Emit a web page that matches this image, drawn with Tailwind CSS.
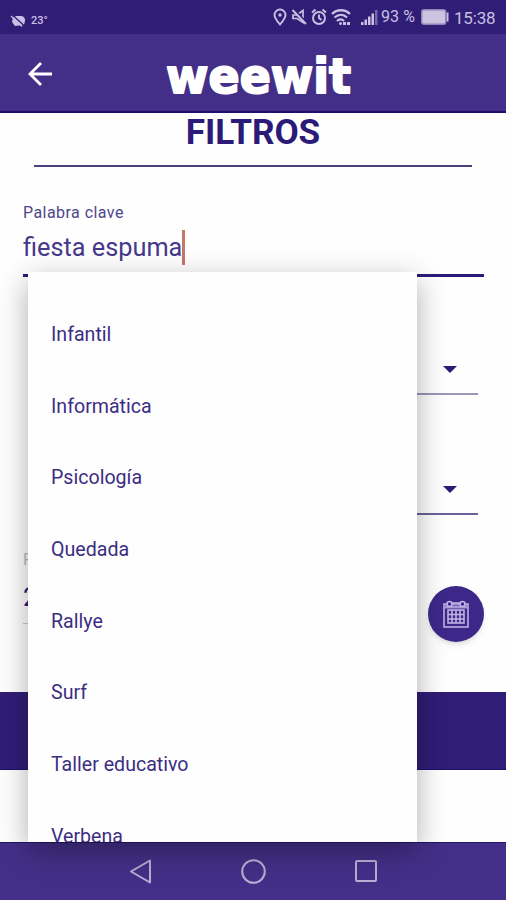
<!DOCTYPE html>
<html lang="es">
<head>
<meta charset="utf-8">
<title>weewit</title>
<script src="https://cdn.jsdelivr.net/npm/@tailwindcss/browser@4"></script>
</head>
<body class="bg-white">
<div class="relative flex h-[900px] w-[506px] flex-col overflow-hidden bg-[#fefefe] font-[Roboto,sans-serif] text-[#2c1a78]">
  <div class="flex h-[34px] shrink-0 items-center bg-[#301d76] pl-[10px] pr-[10px] text-[#c9c0e4]">
    <svg class="mt-2 h-[12px] w-[17px]" viewBox="0 0 17 12"><path d="M5 11L2 7 3 2.500 6 1h5.500A4 4 0 0 1 15 5.500L14 10z" fill="currentColor"/><path d="M2.500 0l12 11" stroke="#301d76" stroke-width="1.300"/><path d="M1 1l11 10.500" stroke="currentColor" stroke-width="1.200"/></svg>
    <span class="ml-1 mt-2 text-[11px] font-medium leading-3">23°</span>
    <svg class="ml-auto h-[20px] w-[78px]" viewBox="0 0 78 20" fill="none" stroke="currentColor" stroke-width="1.900">
      <path d="M7 17.500C4 14 1.500 11 1.500 8a5.500 5.500 0 0 1 11 0c0 3-2.500 6-5.500 9.500z"/><circle cx="7" cy="8" r="1.700" fill="currentColor" stroke="none"/>
      <path d="M20 8h4l6-4.500v12l-6-4h-4z" stroke-width="1.700"/><path d="M21 2.500l13 14" stroke="#301d76" stroke-width="2.500"/><path d="M19.500 3l13.500 14"/>
      <circle cx="46" cy="11" r="6"/><path d="M46 7.500V11l2.500 2M39 5.500l3.500-3M53 5.500l-3.500-3"/>
      <path d="M59 7c5-5 13-5 18 0M61.500 10.500c4-3.500 9-3.500 12.500 0M64 14c2-2 5-2 7 0" stroke-width="2.300"/><circle cx="67.500" cy="16.500" r="1.500" fill="currentColor" stroke="none"/><path d="M70 16.500h7" stroke-dasharray="3 1" stroke-width="3"/>
    </svg>
    <svg class="ml-[10px] h-[15px] w-[17px]" viewBox="0 0 17 15" fill="currentColor"><path d="M0 12h2.500v3H0zM3.500 9.500H6V15H3.500zM7 6.500h2.500V15H7zM10.500 3.500H13V15h-2.500z"/><path opacity=".45" d="M14 0h2.500v15H14z"/></svg>
    <span class="ml-[3px] w-[35px] whitespace-nowrap text-[16px] leading-5 tracking-[0.1px]">93 %</span>
    <svg class="ml-[5px] h-[16px] w-[28px]" viewBox="0 0 28 16"><rect x=".7" y=".7" width="24" height="14.600" rx="2" fill="#cbc4e0" stroke="#8f83b8" stroke-width="1.400"/><path d="M26.500 3.500v9" stroke="currentColor" stroke-width="2"/></svg>
    <span class="ml-[5px] mt-[1px] w-[42px] text-[17px] leading-5 tracking-[-0.2px]">15:38</span>
  </div>
  <header class="flex h-[79px] shrink-0 items-center border-b-2 border-[#200d6d] bg-[#442f88] pl-[28px]">
    <svg class="mt-[2px] h-[24px] w-[24px]" viewBox="0 0 24 24" fill="none" stroke="#fff" stroke-width="2.800"><path d="M24 12H2M13 1L2 12l11 11"/></svg>
    <svg class="ml-[113px] h-[60px] w-[200px] overflow-visible" viewBox="0 0 200 60"><text x="1" y="50" textLength="185" lengthAdjust="spacingAndGlyphs" font-family="DejaVu Sans, sans-serif" font-weight="700" font-size="48.500" fill="#fff" stroke="#fff" stroke-width="2" stroke-linejoin="round">weewit</text></svg>
  </header>
  <main class="flex flex-1 flex-col">
    <h1 class="mx-[34px] h-[54px] border-b-2 border-[#4a407e] text-center text-[35.200px] font-bold leading-[39px] tracking-[-0.1px]">FILTROS</h1>
    <section class="ml-[23px] mr-[22px] mt-[36px] flex h-[74px] flex-col border-b-[3px] border-[#2c1a78]">
      <label class="text-[16px] leading-5 tracking-[0.450px] text-[#50458b]">Palabra clave</label>
      <div class="mt-[7px] flex h-[36px] items-center text-[25.300px] leading-9 text-[#46388b]"><span>fiesta espuma</span><span class="-mt-[2px] h-[35px] w-[3px] bg-[#c57769]"></span></div>
    </section>
    <div class="ml-[28px] mr-[28px] flex h-[118px] items-end justify-end border-b-2 border-[#9c96bb] pb-[20px] pr-[21px]"><svg class="h-[7px] w-[14px]" viewBox="0 0 14 7"><path d="M0 0h14L7 7z" fill="#2c1a78"/></svg></div>
    <div class="ml-[28px] mr-[28px] flex h-[120px] items-end justify-end border-b-2 border-[#6c6299] pb-[20px] pr-[21px]"><svg class="h-[7px] w-[14px]" viewBox="0 0 14 7"><path d="M0 0h14L7 7z" fill="#2c1a78"/></svg></div>
    <div class="ml-[23px] mr-[22px] flex h-[177px] justify-between">
      <div class="mt-[35px] flex h-[74px] w-[200px] flex-col border-b border-[#ccc]"><span class="text-[16px] leading-5 text-[#bbb]">F</span><span class="mt-[9px] text-[26px] leading-9">2</span></div>
      <div class="mt-[71px] flex h-[56px] w-[56px] items-center justify-center rounded-full bg-[#3d2889] shadow-md">
        <svg class="h-[28px] w-[26px]" viewBox="0 0 26 28" fill="none" stroke="#c5b6e8" stroke-width="1.500"><rect x="1" y="4" width="24" height="23"/><path d="M1 7h24" stroke-width="3" stroke="#a796d4"/><circle cx="6.500" cy="4" r="2.500" fill="#3d2889"/><circle cx="19.500" cy="4" r="2.500" fill="#3d2889"/><path d="M9 3h8M5 10h16v13H5zM5 14.500h16M5 19h16M9 10v13M13 10v13M17 10v13" stroke-width="1.500"/></svg>
      </div>
    </div>
    <div class="h-[78px] border-b border-[#200d6d] bg-[#301d76]"></div>
  </main>
  <div class="absolute left-[28px] top-[272px] z-10 h-[570px] w-[389px]">
    <ul class="flex h-full flex-col overflow-hidden bg-[#fefefe] pl-[23px] pt-[27px] text-[19.600px] leading-[71.700px] text-[#3c2d83] shadow-[0_9px_28px_rgba(0,0,0,0.32)]">
      <li class="h-[71.700px] shrink-0">Infantil</li>
      <li class="h-[71.700px] shrink-0">Informática</li>
      <li class="h-[71.700px] shrink-0">Psicología</li>
      <li class="h-[71.700px] shrink-0">Quedada</li>
      <li class="h-[71.700px] shrink-0">Rallye</li>
      <li class="h-[71.700px] shrink-0">Surf</li>
      <li class="h-[71.700px] shrink-0">Taller educativo</li>
      <li class="h-[71.700px] shrink-0">Verbena</li>
    </ul>
  </div>
  <nav class="flex h-[58px] shrink-0 items-center justify-center gap-[88px] border-t border-[#271465] bg-[#442f88]">
    <svg class="h-[26px] w-[24px]" viewBox="0 0 24 26" fill="none" stroke="#b9aed3" stroke-width="2" stroke-linejoin="round"><path d="M22 1.500v22L3 12.500z"/></svg>
    <svg class="h-[26px] w-[26px]" viewBox="0 0 26 26" fill="none" stroke="#b9aed3" stroke-width="2"><circle cx="13.500" cy="12.500" r="11.300"/></svg>
    <svg class="h-[24px] w-[24px]" viewBox="0 0 24 24" fill="none" stroke="#b9aed3" stroke-width="2"><rect x="2" y="1" width="20" height="20" rx="1"/></svg>
  </nav>
</div>
</body>
</html>
